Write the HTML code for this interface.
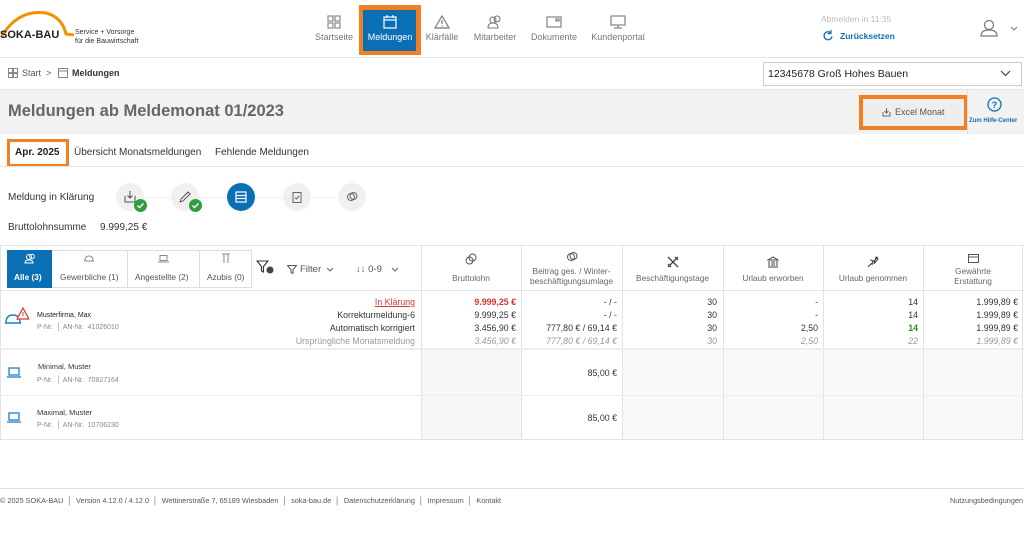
<!DOCTYPE html>
<html><head><meta charset="utf-8"><style>
*{box-sizing:border-box;margin:0;padding:0}
body{width:1024px;height:545px;background:#fff;font-family:"Liberation Sans",sans-serif;color:#333;position:relative;overflow:hidden;font-size:9px}
.a{position:absolute;white-space:nowrap}
.nav{position:absolute;top:10px;width:60px;text-align:center;color:#777;font-size:9px}
.nav svg{display:block;margin:5px auto 3px}
.r{text-align:right}
.vl{position:absolute;width:1px;background:#e3e3e3}
.hl{position:absolute;height:1px;background:#e3e3e3}
.circ{position:absolute;width:28px;height:28px;border-radius:50%;background:#f0f0f0;top:183px}
.chk{position:absolute;width:13px;height:13px;border-radius:50%;background:#2e9d3a;left:18px;top:16px}
.hdr{position:absolute;top:248px;text-align:center;color:#666;font-size:8.3px;line-height:10px}
.g{color:#999;font-style:italic}
</style></head><body>
<svg class="a" style="left:0;top:10px" width="74" height="36"><path d="M2 26 Q18 -1 46 3 Q62 7 66 24 L74 25" fill="none" stroke="#f39200" stroke-width="3"/></svg>
<div class="a" style="left:0;top:29px;font-weight:bold;font-size:11px;color:#222">SOKA-BAU</div>
<div class="a" style="left:75px;top:28px;font-size:7px;line-height:9px;color:#333">Service + Vorsorge<br>für die Bauwirtschaft</div>
<div class="nav" style="left:304px"><svg width="14" height="14"><g fill="none" stroke="#888" stroke-width="1.2"><rect x="1" y="1" width="5" height="5"/><rect x="8" y="1" width="5" height="5"/><rect x="1" y="8" width="5" height="5"/><rect x="8" y="8" width="5" height="5"/></g></svg>Startseite</div>
<div class="a" style="left:359px;top:5px;width:62px;height:50px;background:#f47f20"></div>
<div class="a" style="left:363px;top:10px;width:53px;height:41px;background:#0b6fb5"></div>
<div class="nav" style="left:359px;color:#fff;width:62px"><svg width="14" height="14"><g fill="none" stroke="#fff" stroke-width="1.2"><rect x="1" y="2" width="12" height="11"/><line x1="1" y1="5" x2="13" y2="5"/><line x1="4" y1="0" x2="4" y2="3"/><line x1="10" y1="0" x2="10" y2="3"/></g></svg>Meldungen</div>
<div class="nav" style="left:412px"><svg width="16" height="14"><path d="M8 1 L15 13 H1 Z M8 5 V9 M8 10.5 V11.5" fill="none" stroke="#777" stroke-width="1.2"/></svg>Klärfälle</div>
<div class="nav" style="left:465px"><svg width="16" height="14"><g fill="none" stroke="#777" stroke-width="1.1"><circle cx="6" cy="5" r="3"/><path d="M1 13 Q1 8 6 8 Q11 8 11 13Z"/><circle cx="10" cy="4" r="3"/></g></svg>Mitarbeiter</div>
<div class="nav" style="left:524px"><svg width="16" height="14"><g fill="none" stroke="#777" stroke-width="1.1"><rect x="1" y="2" width="14" height="10"/><rect x="10" y="4" width="3" height="2"/></g></svg>Dokumente</div>
<div class="nav" style="left:588px"><svg width="16" height="14"><g fill="none" stroke="#777" stroke-width="1.1"><rect x="1" y="1" width="14" height="9"/><line x1="8" y1="10" x2="8" y2="13"/><line x1="4" y1="13" x2="12" y2="13"/></g></svg>Kundenportal</div>
<div class="a" style="left:821px;top:14px;color:#bbb;font-size:8.5px">Abmelden in 11:35</div>
<svg class="a" style="left:822px;top:30px" width="11" height="11"><path d="M9 3 A4 4 0 1 0 10 6.5" fill="none" stroke="#0b6fb5" stroke-width="1.3"/><path d="M9 0 V3.5 H5.5" fill="none" stroke="#0b6fb5" stroke-width="1.2"/></svg>
<div class="a" style="left:840px;top:31px;color:#0b6fb5;font-weight:bold;font-size:8.5px">Zurücksetzen</div>
<svg class="a" style="left:980px;top:19px" width="18" height="18"><g fill="none" stroke="#777" stroke-width="1.2"><circle cx="9" cy="6" r="4.5"/><path d="M1 17 Q1 11 9 11 Q17 11 17 17Z"/></g></svg>
<svg class="a" style="left:1010px;top:26px" width="8" height="5"><path d="M1 1 L4 4 L7 1" fill="none" stroke="#777"/></svg>
<div class="hl" style="left:0;top:57px;width:1024px"></div>
<svg class="a" style="left:8px;top:68px" width="10" height="10"><g fill="none" stroke="#888"><rect x="0.5" y="0.5" width="4" height="4"/><rect x="5.5" y="0.5" width="4" height="4"/><rect x="0.5" y="5.5" width="4" height="4"/><rect x="5.5" y="5.5" width="4" height="4"/></g></svg>
<div class="a" style="left:22px;top:68px;color:#555;font-size:9px">Start &nbsp;&gt;</div>
<svg class="a" style="left:58px;top:68px" width="10" height="10"><rect x="0.5" y="0.5" width="9" height="9" fill="none" stroke="#888"/><line x1="0" y1="3" x2="10" y2="3" stroke="#888"/></svg>
<div class="a" style="left:72px;top:68px;font-weight:bold;font-size:9px;color:#333">Meldungen</div>
<div class="a" style="left:763px;top:62px;width:259px;height:24px;border:1px solid #ccc"></div>
<div class="a" style="left:768px;top:68px;font-size:10.5px;color:#222">12345678 Groß Hohes Bauen</div>
<svg class="a" style="left:1000px;top:70px" width="11" height="7"><path d="M1 1 L5.5 5.5 L10 1" fill="none" stroke="#444" stroke-width="1.2"/></svg>
<div class="hl" style="left:0;top:89px;width:1024px"></div>
<div class="a" style="left:0;top:90px;width:1024px;height:44px;background:#f2f2f2"></div>
<div class="a" style="left:8px;top:102px;font-size:16.5px;font-weight:bold;color:#666">Meldungen ab Meldemonat 01/2023</div>
<div class="a" style="left:859px;top:95px;width:109px;height:35px;background:#f47f20"></div>
<div class="a" style="left:863px;top:99px;width:101px;height:27px;background:#eee"></div>
<svg class="a" style="left:882px;top:108px" width="9" height="9"><path d="M1 4 V8 H8 V4 M4.5 0 V5 M2.5 3 L4.5 5 L6.5 3" fill="none" stroke="#666"/></svg>
<div class="a" style="left:895px;top:107px;font-size:9px;color:#555">Excel Monat</div>
<div class="vl" style="left:967px;top:90px;height:44px;background:#ddd"></div>
<svg class="a" style="left:987px;top:97px" width="15" height="15"><circle cx="7.5" cy="7.5" r="6.5" fill="none" stroke="#0b6fb5" stroke-width="1.3"/><text x="7.5" y="11" text-anchor="middle" font-size="9" font-weight="bold" fill="#0b6fb5" font-family="Liberation Sans">?</text></svg>
<div class="a" style="left:969px;top:118px;color:#0b6fb5;font-weight:bold;font-size:6px">Zum Hilfe-Center</div>
<div class="a" style="left:7px;top:139px;width:62px;height:28px;background:#f47f20"></div>
<div class="a" style="left:10px;top:142px;width:56px;height:22px;background:#fff"></div>
<div class="a" style="left:15px;top:147px;font-weight:bold;font-size:10px;color:#222">Apr. 2025</div>
<div class="a" style="left:74px;top:147px;font-size:10px;color:#333">Übersicht Monatsmeldungen</div>
<div class="a" style="left:215px;top:147px;font-size:10px;color:#333">Fehlende Meldungen</div>
<div class="hl" style="left:0;top:166px;width:1024px"></div>
<div class="a" style="left:8px;top:192px;font-size:10px;color:#333">Meldung in Klärung</div>
<div class="hl" style="left:130px;top:197px;width:225px;background:#eee"></div>
<div class="circ" style="left:116px"><svg style="margin:8px" width="12" height="12"><path d="M1 5 V11 H11 V5 M6 0 V7 M3.5 4.5 L6 7 L8.5 4.5" fill="none" stroke="#555"/></svg><div class="chk"><svg width="13" height="13"><path d="M3.5 6.5 L5.5 8.5 L9.5 4.5" fill="none" stroke="#fff" stroke-width="1.4"/></svg></div></div>
<div class="circ" style="left:171px"><svg style="margin:8px" width="12" height="12"><path d="M1 11 L2 8 L9 1 L11 3 L4 10 Z" fill="none" stroke="#555"/></svg><div class="chk"><svg width="13" height="13"><path d="M3.5 6.5 L5.5 8.5 L9.5 4.5" fill="none" stroke="#fff" stroke-width="1.4"/></svg></div></div>
<div class="circ" style="left:227px;background:#0b6fb5"><svg style="margin:8px" width="12" height="12"><g fill="none" stroke="#fff" stroke-width="1.2"><rect x="1" y="1" width="10" height="10"/><line x1="1" y1="4.5" x2="11" y2="4.5"/><line x1="1" y1="7.5" x2="11" y2="7.5"/></g></svg></div>
<div class="circ" style="left:283px"><svg style="margin:8px" width="12" height="12"><g fill="none" stroke="#666"><rect x="2" y="1.5" width="8" height="10"/><path d="M4 6.5 L5.5 8 L8 5"/></g></svg></div>
<div class="circ" style="left:338px"><svg style="margin:8px" width="12" height="12"><g fill="none" stroke="#666"><circle cx="5" cy="6" r="3.5"/><circle cx="7.5" cy="5" r="3.5"/></g></svg></div>
<div class="a" style="left:8px;top:222px;font-size:10px;color:#333">Bruttolohnsumme</div>
<div class="a" style="left:100px;top:222px;font-size:10px;color:#333">9.999,25 €</div>
<div class="hl" style="left:0;top:245px;width:1024px"></div>
<div class="a" style="left:7px;top:250px;width:245px;height:38px;border:1px solid #ddd"></div>
<div class="a" style="left:7px;top:250px;width:45px;height:38px;background:#0b6fb5"></div>
<svg class="a" style="left:24px;top:253px" width="12" height="11"><g fill="none" stroke="#fff"><circle cx="5" cy="4" r="2.5"/><path d="M1 10 Q1 7 5 7 Q9 7 9 10Z"/><circle cx="8" cy="3.5" r="2.3"/></g></svg>
<div class="a" style="left:14px;top:272px;color:#fff;font-weight:bold;font-size:8.3px">Alle (3)</div>
<div class="vl" style="left:127px;top:250px;height:38px;background:#ddd"></div>
<div class="vl" style="left:199px;top:250px;height:38px;background:#ddd"></div>
<svg class="a" style="left:84px;top:255px" width="10" height="7"><path d="M1 6 Q1 1 5 1 Q9 1 9 6 H0 H10" fill="none" stroke="#888"/></svg>
<div class="a" style="left:60px;top:272px;color:#555;font-size:8.3px">Gewerbliche (1)</div>
<svg class="a" style="left:158px;top:255px" width="11" height="8"><g fill="none" stroke="#888"><rect x="2" y="0.5" width="7" height="5"/><line x1="0" y1="7" x2="11" y2="7"/></g></svg>
<div class="a" style="left:135px;top:272px;color:#555;font-size:8.3px">Angestellte (2)</div>
<svg class="a" style="left:221px;top:253px" width="10" height="11"><g fill="none" stroke="#888"><path d="M1 1 H9 M3 1 V10 M7 1 V10"/></g></svg>
<div class="a" style="left:207px;top:272px;color:#555;font-size:8.3px">Azubis (0)</div>
<svg class="a" style="left:256px;top:260px" width="20" height="14"><path d="M1 1 H12 L7.5 6.5 V12 L5.5 11 V6.5 Z" fill="none" stroke="#333" stroke-width="1.1"/><circle cx="14" cy="10" r="3.5" fill="#444"/></svg>
<svg class="a" style="left:287px;top:265px" width="10" height="9"><path d="M0.5 0.5 H9.5 L6 4.5 V8.5 L4 7.5 V4.5Z" fill="none" stroke="#555"/></svg>
<div class="a" style="left:300px;top:264px;color:#555;font-size:9.5px">Filter</div>
<svg class="a" style="left:326px;top:267px" width="8" height="5"><path d="M1 1 L4 4 L7 1" fill="none" stroke="#666"/></svg>
<div class="a" style="left:356px;top:264px;color:#555;font-size:9.5px">↓↓ 0-9</div>
<svg class="a" style="left:391px;top:267px" width="8" height="5"><path d="M1 1 L4 4 L7 1" fill="none" stroke="#666"/></svg>
<div class="vl" style="left:421px;top:246px;height:194px"></div>
<div class="vl" style="left:521px;top:246px;height:194px"></div>
<div class="vl" style="left:622px;top:246px;height:194px"></div>
<div class="vl" style="left:723px;top:246px;height:194px"></div>
<div class="vl" style="left:823px;top:246px;height:194px"></div>
<div class="vl" style="left:923px;top:246px;height:194px"></div>
<div class="vl" style="left:1022px;top:246px;height:194px"></div>
<div class="vl" style="left:0;top:246px;height:194px"></div>
<div class="hdr" style="left:421px;width:100px"><svg style="display:block;margin:5px auto 8px" width="12" height="12"><g fill="none" stroke="#555"><circle cx="4.5" cy="7.5" r="3.5"/><circle cx="7.5" cy="4.5" r="3.5"/></g></svg>Bruttolohn</div>
<div class="hdr" style="left:521px;width:101px"><svg style="display:block;margin:3px auto 3px" width="12" height="12"><g fill="none" stroke="#555"><circle cx="5" cy="6" r="3.5"/><circle cx="7.5" cy="5" r="3.5"/></g></svg>Beitrag ges. / Winter-<br>beschäftigungsumlage</div>
<div class="hdr" style="left:622px;width:101px"><svg style="display:block;margin:8px auto 5px" width="12" height="12"><path d="M1 1 L11 11 M11 1 L1 11 M8 1 L11 4 M1 8 L4 11" fill="none" stroke="#444" stroke-width="1.3"/></svg>Beschäftigungstage</div>
<div class="hdr" style="left:723px;width:100px"><svg style="display:block;margin:8px auto 5px" width="12" height="12"><path d="M1 4 L6 1 L11 4 Z M2 5 V10 M5 5 V10 M7 5 V10 M10 5 V10 M1 11 H11" fill="none" stroke="#444"/></svg>Urlaub erworben</div>
<div class="hdr" style="left:823px;width:100px"><svg style="display:block;margin:8px auto 5px" width="12" height="12"><path d="M1 11 L11 1 M3 4 L7 5 M5 9 L6 5 M9 1 L11 3 L7 8 Z" fill="none" stroke="#444"/></svg>Urlaub genommen</div>
<div class="hdr" style="left:923px;width:100px"><svg style="display:block;margin:6px auto 3px" width="11" height="9"><g fill="none" stroke="#555"><rect x="0.5" y="0.5" width="10" height="8"/><line x1="0" y1="3" x2="11" y2="3"/></g></svg>Gewährte<br>Erstattung</div>
<div class="hl" style="left:0;top:290px;width:1024px"></div>
<svg class="a" style="left:5px;top:307px" width="24" height="18"><path d="M1 16 Q1 8 8 8 Q15 8 15 16 Z M0 16 H16" fill="none" stroke="#1a7fc8" stroke-width="1.4"/><path d="M18 1 L24 12 H12Z" fill="#fff" stroke="#e03030" stroke-width="1.2"/><line x1="18" y1="5" x2="18" y2="9" stroke="#e03030"/></svg>
<div class="a" style="left:37px;top:312px;font-size:7px;color:#222">Musterfirma, Max</div>
<div class="a" style="left:37px;top:324px;font-size:7px;color:#888">P-Nr. &nbsp;│ AN-Nr. &nbsp;41026010</div>
<div class="a r" style="left:200px;width:215px;top:296px;font-size:8.8px;line-height:13px;color:#333">
<span style="color:#e03030;text-decoration:underline">In Klärung</span><br>Korrekturmeldung-6<br>Automatisch korrigiert<br><span style="color:#999">Ursprüngliche Monatsmeldung</span></div>
<div class="a r" style="left:421px;width:95px;top:296px;font-size:8.8px;line-height:13px"><b style="color:#e03030">9.999,25 €</b><br>9.999,25 €<br>3.456,90 €<br><span class="g">3.456,90 €</span></div>
<div class="a r" style="left:521px;width:96px;top:296px;font-size:8.8px;line-height:13px">- / -<br>- / -<br>777,80 € / 69,14 €<br><span class="g">777,80 € / 69,14 €</span></div>
<div class="a r" style="left:622px;width:95px;top:296px;font-size:8.8px;line-height:13px">30<br>30<br>30<br><span class="g">30</span></div>
<div class="a r" style="left:723px;width:95px;top:296px;font-size:8.8px;line-height:13px">-<br>-<br>2,50<br><span class="g">2,50</span></div>
<div class="a r" style="left:823px;width:95px;top:296px;font-size:8.8px;line-height:13px">14<br>14<br><b style="color:#2e8b2e">14</b><br><span class="g">22</span></div>
<div class="a r" style="left:923px;width:95px;top:296px;font-size:8.8px;line-height:13px">1.999,89 €<br>1.999,89 €<br>1.999,89 €<br><span class="g">1.999,89 €</span></div>
<div class="a" style="left:0;top:348px;width:1024px;height:2px;background:#eee"></div>
<div class="a" style="left:422px;top:350px;width:99px;height:89px;background:#f7f7f7"></div>
<div class="a" style="left:623px;top:350px;width:399px;height:89px;background:#f9f9f9"></div>
<div class="vl" style="left:723px;top:350px;height:90px"></div><div class="vl" style="left:823px;top:350px;height:90px"></div><div class="vl" style="left:923px;top:350px;height:90px"></div>
<svg class="a" style="left:7px;top:367px" width="14" height="11"><g fill="none" stroke="#1a7fc8" stroke-width="1.3"><rect x="2" y="1" width="10" height="7"/><line x1="0" y1="10" x2="14" y2="10"/></g></svg>
<div class="a" style="left:38px;top:362px;font-size:7.5px;color:#333">Minimal, Muster</div>
<div class="a" style="left:37px;top:377px;font-size:7px;color:#888">P-Nr. &nbsp;│ AN-Nr. &nbsp;70827164</div>
<div class="a r" style="left:521px;width:96px;top:368px;font-size:8.8px">85,00 €</div>
<div class="hl" style="left:0;top:395px;width:1024px;background:#eee"></div>
<svg class="a" style="left:7px;top:412px" width="14" height="11"><g fill="none" stroke="#1a7fc8" stroke-width="1.3"><rect x="2" y="1" width="10" height="7"/><line x1="0" y1="10" x2="14" y2="10"/></g></svg>
<div class="a" style="left:37px;top:408px;font-size:7.5px;color:#333">Maximal, Muster</div>
<div class="a" style="left:37px;top:422px;font-size:7px;color:#888">P-Nr. &nbsp;│ AN-Nr. &nbsp;10706230</div>
<div class="a r" style="left:521px;width:96px;top:413px;font-size:8.8px">85,00 €</div>
<div class="hl" style="left:0;top:439px;width:1024px"></div>
<div class="hl" style="left:0;top:488px;width:1024px;background:#ddd"></div>
<div class="a" style="left:0;top:496px;font-size:7.3px;color:#555">© 2025 SOKA-BAU &nbsp;│&nbsp; Version 4.12.0 / 4.12.0 &nbsp;│&nbsp; Wettinerstraße 7, 65189 Wiesbaden &nbsp;│&nbsp; soka-bau.de &nbsp;│&nbsp; Datenschutzerklärung &nbsp;│&nbsp; Impressum &nbsp;│&nbsp; Kontakt</div>
<div class="a" style="right:1px;top:496px;font-size:7.3px;color:#555">Nutzungsbedingungen</div>
</body></html>
